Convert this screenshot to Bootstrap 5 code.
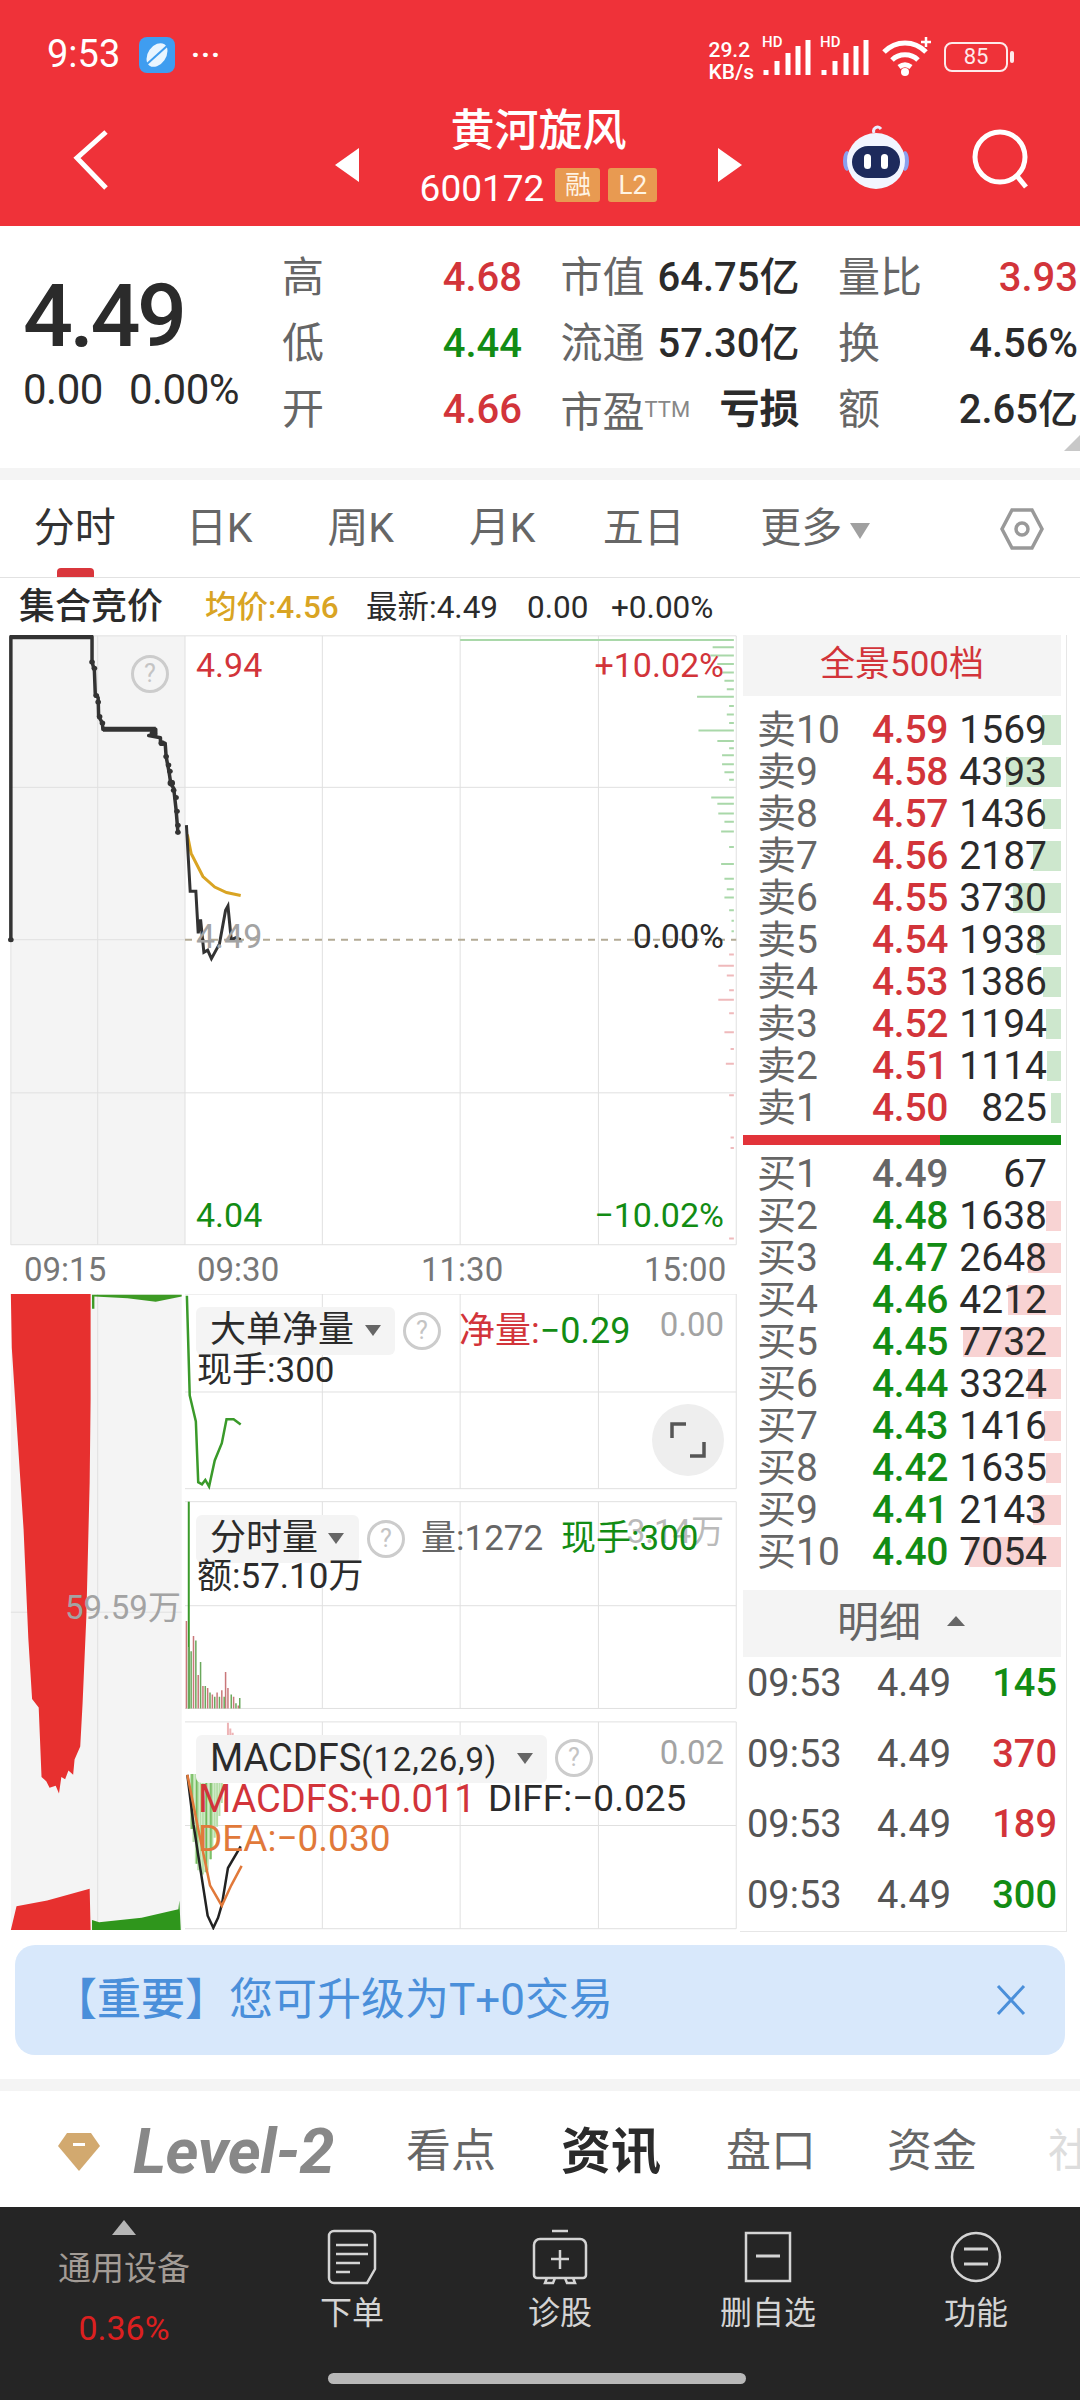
<!DOCTYPE html>
<html lang="zh-CN">
<head>
<meta charset="UTF-8">
<meta name="viewport" content="width=device-width, initial-scale=1">
<title>黄河旋风 600172</title>
<link href="https://cdn.jsdelivr.net/npm/bootstrap@5.3.2/dist/css/bootstrap.min.css" rel="stylesheet">
<style>
  html, body { width: 1080px; height: 2400px; overflow: hidden; }
  body { background: #fff; color: #2b2b2b; font-family: Roboto, "Noto Sans CJK SC", sans-serif; font-size: 36px; line-height: 1.2; }
  .c-red { color: #d2343a; }
  .c-green { color: #128c14; }
  .c-gray { color: #666; }
  .c-light { color: #a3a3a3; }
  svg { display: block; }

  /* header */
  .top-head { background: #ef3239; height: 226px; color: #fff; }
  .stat-row { height: 100px; padding: 33px 68px 0 47px; }
  .stat-time { font-size: 38px; line-height: 42px; width: 84px; }
  .stat-dots { font-size: 30px; line-height: 20px; letter-spacing: 1px; margin: 12px 0 0 16px; font-weight: 700; }
  .stat-right { margin-top: 4px; }
  .stat-speed { font-size: 21px; line-height: 22px; font-weight: 500; margin-top: 2px; }
  .stat-sig { position: relative; width: 50px; height: 40px; }
  .stat-sig span { position: absolute; left: 0; top: -2px; font-size: 15px; line-height: 15px; font-weight: 500; }
  .stat-batt { width: 64px; height: 30px; border: 2px solid #fff; border-radius: 8px; font-size: 22px; line-height: 26px; text-align: center; position: relative; margin-right: 4px; margin-top: 5px; opacity: .9; }
  .stat-batt::after { content: ""; position: absolute; right: -8px; top: 7px; width: 4px; height: 12px; background: #fff; border-radius: 2px; }
  .nav-row { display: grid; grid-template-columns: 335px 407px 338px; height: 126px; }
  .back-cell { padding: 30px 0 0 73px; }
  .mid-cell { padding-top: 6px; }
  .stock-name { font-size: 44px; line-height: 50px; font-weight: 500; text-align: center; }
  .stock-code { font-size: 37px; line-height: 42px; margin-top: 12px; }
  .code-tag { background: #e89a51; border-radius: 3px; font-size: 26px; line-height: 34px; height: 34px; text-align: center; margin-left: 8px; color: #fff4e4; }
  .tag-a { width: 45px; margin-left: 11px; }
  .tag-b { width: 49px; }
  .tri-cell { padding-top: 42px; }
  .right-cell { padding: 25px 50px 0 100px; }

  /* quote */
  .quote-box { height: 242px; padding-top: 19px; }
  .price-cell { width: 282px; padding: 25px 0 0 23px; flex: none; }
  .price-big { font-size: 88px; line-height: 92px; font-weight: 500; letter-spacing: -3.5px; }
  .price-sub { font-size: 42px; line-height: 48px; margin-top: 4px; letter-spacing: -.5px; }
  .price-sub span + span { margin-left: 26px; }
  .quote-grid { display: grid; grid-template-columns: 240px 239px 240px; column-gap: 38.5px; grid-auto-rows: 66px; flex: none; }
  .q-item { line-height: 66px; font-size: 40px; white-space: nowrap; }
  .q-item .q-lab { font-size: 42px; color: #666; }
  .ttm { font-size: 22px; color: #888; vertical-align: 10px; }
  .q-val { font-weight: 500; }
  .corner-mark { position: absolute; right: 0; top: 435px; width: 0; height: 0; border-left: 16px solid transparent; border-bottom: 16px solid #c8c8c8; }
  .gap-band { height: 12px; background: #f4f4f4; }

  /* tabs */
  .period-tabs { height: 98px; border-bottom: 1px solid #e2e2e2; position: relative; padding-left: 4px; }
  .period-tab { width: 141.5px; text-align: center; font-size: 41px; line-height: 96px; color: #666; flex: none; }
  .tab-shift { margin-left: 3px; }
  .period-on { color: #333; }
  .period-on::after { content: ""; position: absolute; left: 57px; top: 88px; width: 37px; height: 9px; border-radius: 4px 4px 0 0; background: #d9363c; }
  .more-tri { display: inline-block; width: 0; height: 0; border-left: 10px solid transparent; border-right: 10px solid transparent; border-top: 16px solid #a0a0a0; margin-left: 8px; vertical-align: 3px; }
  .more-tab { margin-left: 30px; }
  .hex-wrap { margin-left: auto; margin-right: 36px; align-self: center; }

  .info-row { height: 57px; padding-left: 19px; line-height: 60px; white-space: nowrap; font-size: 31.5px; }
  .info-title { font-size: 36px; font-weight: 500; width: 186px; flex: none; line-height: 58px; }
  .info-avg { color: #d9a423; font-weight: 500; width: 161px; flex: none; }
  .info-new { width: 161px; flex: none; }
  .info-chg { width: 84px; flex: none; }

  /* chart column */
  .board { height: 1297px; }
  .chart-col { width: 740px; flex: none; }
  .main-wrap { position: relative; height: 611px; }
  .main-wrap > svg, .sub-wrap > svg { width: 740px; height: 100%; }
  .sub-wrap { position: relative; height: 636px; }
  .ov { position: absolute; line-height: 40px; white-space: nowrap; }
  .ov-m { font-size: 34px; }
  .pos-hi { left: 196px; top: 10px; }
  .pos-hip { right: 16px; top: 10px; }
  .pos-mid { left: 196px; top: 281px; }
  .pos-midp { right: 16px; top: 281px; }
  .pos-lo { left: 196px; top: 560px; }
  .pos-lop { right: 16px; top: 560px; }
  .q-mark { position: absolute; width: 38px; height: 38px; border: 3px solid #ccc; border-radius: 50%; color: #c4c4c4; font-size: 25px; line-height: 32px; text-align: center; }
  .pos-q0 { left: 131px; top: 20px; }
  .time-row { display: grid; grid-template-columns: 173px 224px 223px auto; height: 48px; padding-left: 24px; font-size: 33px; line-height: 48px; color: #777; }

  .sel-chip { position: absolute; background: #f4f4f4; border-radius: 6px; height: 48px; padding-left: 14px; line-height: 46px; color: #2b2b2b; white-space: nowrap; }
  .chip-tri { position: absolute; top: 18px; width: 0; height: 0; border-left: 8px solid transparent; border-right: 8px solid transparent; border-top: 11px solid #666; }
  .chip-1 { left: 196px; top: 13px; width: 199px; }
  .chip-1 .chip-tri { left: 169px; }
  .chip-2 { left: 196px; top: 221px; width: 163px; }
  .chip-2 .chip-tri { left: 132px; }
  .chip-3 { left: 196px; top: 441px; width: 351px; font-size: 38px; }
  .chip-3 .chip-tri { left: 321px; }
  .params { font-size: 33px; letter-spacing: .8px; }
  .pos-q1 { left: 403px; top: 18px; }
  .pos-q2 { left: 367px; top: 226px; }
  .pos-q3 { left: 555px; top: 445px; }
  .pos-net { left: 459px; top: 17px; }
  .pos-v1 { right: 16px; top: 11px; font-size: 33px; }
  .pos-hand { left: 197px; top: 57px; font-size: 35px; }
  .pos-vol { left: 421px; top: 225px; font-size: 35px; }
  .pos-hand2 { left: 561px; top: 225px; font-size: 35px; }
  .pos-v2 { right: 16px; top: 218px; font-size: 33px; opacity: .75; }
  .pos-amt { left: 197px; top: 263px; font-size: 35px; }
  .pos-max { left: 65px; top: 294px; font-size: 33px; }
  .pos-v3 { right: 16px; top: 439px; font-size: 33px; }
  .pos-fs { left: 198px; top: 485px; font-size: 38px; }
  .pos-diff { left: 488px; top: 485px; font-size: 37px; }
  .pos-dea { left: 198px; top: 525px; font-size: 37px; color: #e1793a; }
  .expand-btn { position: absolute; left: 652px; top: 110px; width: 72px; height: 72px; border-radius: 50%; background: #eee; padding: 18px; }

  /* order book */
  .book-col { width: 327px; flex: none; padding-left: 3px; padding-right: 5px; border-right: 1px solid #e6e6e6; border-bottom: 1px solid #e6e6e6; position: relative; }
  .book-head { height: 61px; background: #f4f4f4; color: #d2343a; font-size: 35px; line-height: 60px; text-align: center; margin-bottom: 13px; }
  .book-row { display: grid; grid-template-columns: 115px 72px 1fr; height: 42px; line-height: 42px; font-size: 39px; padding-left: 14px; position: relative; white-space: nowrap; }
  .book-lab { color: #666; }
  .book-lab b { font-weight: 400; font-size: 39px; }
  .book-price { font-weight: 500; letter-spacing: -.3px; }
  .book-qty { text-align: right; padding-right: 14px; position: relative; z-index: 1; }
  .depth-bar { position: absolute; right: 0; top: 6px; height: 30px; }
  .bar-sell { background: #cde7cd; }
  .bar-buy { background: #f8d3d3; }
  .split-bar { height: 10px; margin: 6px 0 8px; background: #108c14; }
  .split-bar div { height: 100%; width: 62%; background: #e2333a; }
  .detail-head { height: 67px; background: #f4f4f4; margin-top: 17px; font-size: 42px; line-height: 66px; color: #666; padding-left: 94px; }
  .detail-tri { display: inline-block; width: 0; height: 0; border-left: 9px solid transparent; border-right: 9px solid transparent; border-bottom: 10px solid #666; margin-left: 26px; vertical-align: 11px; }
  .trade-list { row-gap: 18.7px; }
  .trade-row { display: grid; grid-template-columns: 130px 72px 1fr; height: 52px; line-height: 52px; padding-left: 4px; font-size: 38px; color: #555; }
  .trade-qty { text-align: right; padding-right: 4px; font-weight: 500; }

  /* banner */
  .notice-wrap { height: 147px; padding: 13px 15px 0; }
  .notice-box { height: 110px; background: #d8e8fb; border-radius: 20px; padding: 0 39px 0 38px; color: #4a8fda; font-size: 44px; }
  .notice-key { font-weight: 500; }

  /* lower tabs */
  .lower-tabs { height: 116px; position: relative; overflow: hidden; padding: 6px 0 0 58px; font-size: 45px; color: #666; white-space: nowrap; }
  .lvl-text { font-size: 63px; font-style: italic; font-weight: 700; color: #888; margin: 0 72px 0 33px; letter-spacing: -.5px; }
  .lower-tabs span.ltab { flex: none; margin-right: 65px; }
  .ltab-on { font-size: 50px; font-weight: 700; color: #2b2b2b; position: relative; }
  .ltab-on::after { content: ""; position: absolute; left: 20px; bottom: -31px; width: 60px; height: 6px; border-radius: 6px 6px 0 0; background: #d9363c; }
  .ltab-fund { margin-left: 6px; }
  .ltab-fade { color: #ddd; margin-left: 6px; }

  /* bottom bar */
  .dock { height: 193px; background: #252525; color: #d4d4d4; }
  .dock-row { display: grid; grid-template-columns: 248px repeat(4, 208px); height: 166px; }
  .dock-quote { text-align: center; padding-top: 13px; }
  .dock-up { width: 0; height: 0; border-left: 12px solid transparent; border-right: 12px solid transparent; border-bottom: 15px solid #b5b5b5; margin: 0 auto; }
  .dock-sector { font-size: 33px; line-height: 40px; color: #a39c96; margin-top: 14px; }
  .dock-pct { font-size: 34px; line-height: 40px; color: #dc2020; margin-top: 19px; }
  .dock-item { font-size: 32px; line-height: 40px; padding-top: 22px; text-align: center; }
  .dock-item svg { margin: 0 auto 8px; }
  .home-bar { width: 418px; height: 11px; border-radius: 6px; background: #b8b8b8; margin-left: 328px; }
</style>
</head>
<body>

<header class="top-head">
  <div class="stat-row d-flex align-items-start">
    <div class="stat-time">9:53</div>
    <svg width="36" height="36" viewBox="0 0 36 36" class="ms-2 mt-1"><rect width="36" height="36" rx="8" fill="#3f9df0"/><ellipse cx="18" cy="18" rx="9" ry="13" transform="rotate(35 18 18)" fill="#e9f5ff"/><path d="M8 27 28 9" stroke="#3f9df0" stroke-width="2"/></svg>
    <div class="stat-dots">···</div>
    <div class="stat-right ms-auto d-flex align-items-start gap-2">
      <div class="stat-speed">29.2<br>KB/s</div>
      <div class="stat-sig"><span>HD</span><svg width="50" height="40" viewBox="0 0 50 40"><path d="M4 38v-5M15 38V24M26 38V16M36 38V9M46 38V3" stroke="#fff" stroke-width="5" fill="none"/></svg></div>
      <div class="stat-sig"><span>HD</span><svg width="50" height="40" viewBox="0 0 50 40"><path d="M4 38v-5M15 38V24M26 38V16M36 38V9M46 38V3" stroke="#fff" stroke-width="5" fill="none"/></svg></div>
      <svg width="50" height="40" viewBox="0 0 50 40" class="mx-1"><g fill="none" stroke="#fff" stroke-width="5"><path d="M2 15c12-12 30-12 42 0"/><path d="M10 23c7-7 19-7 26 0"/><path d="M17 30c4-3 8-3 12 0"/></g><circle cx="23" cy="35" r="4" fill="#fff"/><path d="M44 0v10M39 5h10" stroke="#fff" stroke-width="2.5"/></svg>
      <div class="stat-batt">85</div>
    </div>
  </div>
  <div class="nav-row">
    <div class="back-cell"><svg width="36" height="60" viewBox="0 0 36 60"><path d="M33 2 4 28l29 30" fill="none" stroke="#fff" stroke-width="5"/></svg></div>
    <div class="mid-cell d-flex justify-content-between">
      <div class="tri-cell"><svg width="24" height="34" viewBox="0 0 24 34"><path d="M24 0v34L0 17z" fill="#fff"/></svg></div>
      <div>
        <div class="stock-name">黄河旋风</div>
        <div class="stock-code d-flex"><span>600172</span><span class="code-tag tag-a">融</span><span class="code-tag tag-b">L2</span></div>
      </div>
      <div class="tri-cell"><svg width="24" height="34" viewBox="0 0 24 34"><path d="M0 0v34l24-17z" fill="#fff"/></svg></div>
    </div>
    <div class="right-cell d-flex justify-content-between">
      <svg width="68" height="66" viewBox="0 0 68 66"><path d="M32 8c-2-5 4-8 7-4" fill="none" stroke="#e8edff" stroke-width="3"/><ellipse cx="5" cy="36" rx="4" ry="10" fill="#8aa0ee"/><ellipse cx="63" cy="36" rx="4" ry="10" fill="#8aa0ee"/><ellipse cx="34" cy="36" rx="29" ry="28" fill="#f2f5ff"/><rect x="10" y="21" width="48" height="32" rx="16" fill="#1d2a5c"/><rect x="22" y="29" width="7" height="15" rx="3.5" fill="#fff"/><rect x="39" y="29" width="7" height="15" rx="3.5" fill="#fff"/></svg>
      <svg width="58" height="60" viewBox="0 0 58 60" class="mt-1"><circle cx="28" cy="28" r="25" fill="none" stroke="#fff" stroke-width="5"/><path d="M45 47l9 11" stroke="#fff" stroke-width="5" fill="none"/></svg>
    </div>
  </div>
</header>

<section class="quote-box d-flex position-relative">
  <div class="price-cell">
    <div class="price-big">4.49</div>
    <div class="price-sub"><span>0.00</span><span>0.00%</span></div>
  </div>
  <div class="quote-grid">
    <div class="q-item d-flex justify-content-between"><span class="q-lab">高</span><span class="c-red q-val">4.68</span></div>
    <div class="q-item d-flex justify-content-between"><span class="q-lab">市值</span><span class="q-val">64.75亿</span></div>
    <div class="q-item d-flex justify-content-between"><span class="q-lab">量比</span><span class="c-red q-val">3.93</span></div>
    <div class="q-item d-flex justify-content-between"><span class="q-lab">低</span><span class="c-green q-val">4.44</span></div>
    <div class="q-item d-flex justify-content-between"><span class="q-lab">流通</span><span class="q-val">57.30亿</span></div>
    <div class="q-item d-flex justify-content-between"><span class="q-lab">换</span><span class="q-val">4.56%</span></div>
    <div class="q-item d-flex justify-content-between"><span class="q-lab">开</span><span class="c-red q-val">4.66</span></div>
    <div class="q-item d-flex justify-content-between"><span class="q-lab">市盈<span class="ttm">TTM</span></span><span class="q-val fw-bold">亏损</span></div>
    <div class="q-item d-flex justify-content-between"><span class="q-lab">额</span><span class="q-val">2.65亿</span></div>
  </div>
</section>
<div class="corner-mark"></div>
<div class="gap-band"></div>

<div class="period-tabs d-flex">
  <div class="period-tab period-on">分时</div>
  <div class="period-tab tab-shift">日K</div>
  <div class="period-tab">周K</div>
  <div class="period-tab">月K</div>
  <div class="period-tab">五日</div>
  <div class="period-tab more-tab">更多<i class="more-tri"></i></div>
  <div class="hex-wrap"><svg width="44" height="42" viewBox="0 0 44 42"><path d="M12 2h20l10 19-10 19H12L2 21z" fill="none" stroke="#999" stroke-width="3.5"/><circle cx="22" cy="21" r="6" fill="none" stroke="#999" stroke-width="3.5"/></svg></div>
</div>

<div class="info-row d-flex">
  <div class="info-title">集合竞价</div>
  <div class="info-avg">均价:4.56</div>
  <div class="info-new">最新:4.49</div>
  <div class="info-chg">0.00</div>
  <div>+0.00%</div>
</div>

<main class="board d-flex">
  <div class="chart-col">
    <div class="main-wrap">
      <svg viewBox="0 36 1568 1452" preserveAspectRatio="none">
        <rect x="23" y="38" width="369" height="1447" fill="#f4f4f4"/>
        <g fill="none" stroke="#e0e0e0" stroke-width="1">
          <path vector-effect="non-scaling-stroke" d="M207 38V1485M392 38V1485M683 38V1485M975 38V1485M1268 38V1485M1560 38V1485M23 38V1485"/>
          <path vector-effect="non-scaling-stroke" d="M23 38H1560M23 398H1560M23 760H392M23 1124H1560M23 1485H1560"/>
        </g>
        <path vector-effect="non-scaling-stroke" d="M392 760H1560" fill="none" stroke="#b3aa95" stroke-width="2" stroke-dasharray="7 6"/>
        <path vector-effect="non-scaling-stroke" fill="none" stroke="#a9d8a9" stroke-width="2" d="M975 48H1555M1555 65H1510M1555 85H1505M1555 105H1520M1555 125H1530M1555 145H1535M1555 165H1540M1555 183H1477M1555 205H1545M1555 225H1540M1555 245H1545M1555 263H1480M1555 288H1520M1555 305H1545M1555 322H1530M1555 343H1530M1555 362H1535M1555 380H1545M1555 422H1507M1555 437H1520M1555 460H1522M1555 480H1535M1555 503H1528M1555 540H1545M1555 580H1528M1555 615H1535M1555 640H1540M1555 660H1535M1555 690H1545M1555 715H1550M1555 740H1550"/>
        <path vector-effect="non-scaling-stroke" fill="none" stroke="#efb9bb" stroke-width="2" d="M1555 795H1545M1555 822H1522M1555 845H1540M1555 880H1545M1555 903H1522M1555 935H1545M1555 980H1535M1555 1020H1548M1555 1055H1538M1555 1130H1545M1555 1230H1548M1555 1255H1548M1555 1470H1545"/>
        <path vector-effect="non-scaling-stroke" fill="none" stroke="#333" stroke-width="3.5" stroke-linejoin="round" d="M23 760V40H195V100L200 120 202 180 208 185 209 230 217 245 218 260H330V275H315L340 280V293H350L352 325 358 360 362 390 368 400 373 450 377 505"/>
        <path vector-effect="non-scaling-stroke" fill="none" stroke="#333" stroke-width="5" d="M23 40H195M218 260H330"/>
        <g fill="#333"><ellipse cx="23" cy="760" rx="6" ry="6"/><ellipse cx="195" cy="100" rx="6" ry="6"/><ellipse cx="200" cy="115" rx="6" ry="6"/><ellipse cx="204" cy="180" rx="6" ry="6"/><ellipse cx="208" cy="195" rx="6" ry="6"/><ellipse cx="211" cy="230" rx="6" ry="6"/><ellipse cx="217" cy="245" rx="6" ry="6"/><ellipse cx="325" cy="270" rx="8" ry="8"/><ellipse cx="343" cy="293" rx="7" ry="7"/><ellipse cx="352" cy="325" rx="6" ry="6"/><ellipse cx="357" cy="345" rx="6" ry="6"/><ellipse cx="360" cy="360" rx="6" ry="6"/><ellipse cx="363" cy="388" rx="8" ry="8"/><ellipse cx="368" cy="405" rx="6" ry="6"/><ellipse cx="373" cy="422" rx="6" ry="6"/><ellipse cx="375" cy="455" rx="6" ry="6"/><ellipse cx="377" cy="488" rx="6" ry="6"/><ellipse cx="377" cy="505" rx="6" ry="6"/></g>
        <path vector-effect="non-scaling-stroke" fill="none" stroke="#d9a423" stroke-width="3" d="M397 510 405 555 430 610 455 635 480 648 510 655"/>
        <path vector-effect="non-scaling-stroke" fill="none" stroke="#333" stroke-width="3" d="M395 488 403 645H415L420 745 425 712 432 790 440 785 448 805 465 770 478 690 483 680 490 760 500 755 510 760"/>
      </svg>
      <span class="ov ov-m pos-hi c-red">4.94</span>
      <span class="ov ov-m pos-hip c-red">+10.02%</span>
      <span class="ov ov-m pos-mid c-light">4.49</span>
      <span class="ov ov-m pos-midp">0.00%</span>
      <span class="ov ov-m pos-lo c-green">4.04</span>
      <span class="ov ov-m pos-lop c-green">−10.02%</span>
      <span class="q-mark pos-q0">?</span>
    </div>
    <div class="time-row"><span>09:15</span><span>09:30</span><span>11:30</span><span>15:00</span></div>
    <div class="sub-wrap">
      <svg viewBox="0 56 1568 1467" preserveAspectRatio="none">
        <rect x="23" y="56" width="362" height="1467" fill="#f4f4f4"/>
        <path vector-effect="non-scaling-stroke" fill="none" stroke="#e0e0e0" d="M207 56V1523M683 56V505M975 56V505M1268 56V505M1560 56V505M683 535V1012M975 535V1012M1268 535V1012M1560 535V1012M683 1043V1520M975 1043V1520M1268 1043V1520M1560 1043V1520M392 56H1560M392 282H1560M392 505H1560M392 535H1560M392 775H1560M392 1012H1560M392 1043H1560M392 1282H1560M392 1520H1560M23 790H385"/>
        <path fill="#e7302f" d="M23 56H192V300L190 490 183 800 175 1000 170 1100 158 1130 155 1165 145 1155 138 1175 130 1170 125 1208 118 1190 105 1195 98 1180 88 1170 82 1010 68 990 60 850 50 600 35 350 25 180Z"/>
        <path fill="#3d9a24" d="M195 58H385V62L330 74 270 66 200 62V90H195Z"/>
        <path fill="#e7302f" d="M23 1523 35 1468 100 1455 190 1428 192 1523Z"/>
        <path fill="#2f961c" d="M195 1500 210 1505 300 1495 378 1475 380 1455 383 1523H195Z"/>
        <path vector-effect="non-scaling-stroke" fill="none" stroke="#3a9a2a" stroke-width="2.5" d="M396 60 402 290 415 350 420 490 428 495 435 485 443 500 455 440 470 400 480 345H495L510 357"/>
        <path vector-effect="non-scaling-stroke" fill="none" stroke="#3a9a2a" stroke-width="2" d="M400 535V1012"/>
        <path vector-effect="non-scaling-stroke" fill="none" stroke="#c9777a" stroke-width="1.5" d="M395 1012V810M410 1012V845M420 1012V935M430 1012V960M440 1012V965M450 1012V980M460 1012V975M470 1012V970M478 1012V928M483 1012V965M495 1012V985M505 1012V1005"/>
        <path vector-effect="non-scaling-stroke" fill="none" stroke="#6aa85c" stroke-width="1.5" d="M400 1012V870M405 1012V880M415 1012V855M425 1012V905M435 1012V960M445 1012V975M455 1012V985M465 1012V985M475 1012V985M490 1012V980M500 1012V1000M508 1012V988"/>
        <path vector-effect="non-scaling-stroke" fill="none" stroke="#b7dfaa" stroke-width="2" d="M405 1163V1290M410 1163V1320M415 1163V1370M420 1163V1385M425 1163V1390M430 1163V1395M435 1163V1390M440 1163V1385M445 1163V1360M450 1163V1335M455 1163V1310M460 1163V1285M465 1163V1260M470 1163V1230"/>
        <path vector-effect="non-scaling-stroke" fill="none" stroke="#6fb85a" stroke-width="1.5" d="M407 1163V1290M417 1163V1370M437 1163V1390M447 1163V1360"/>
        <path vector-effect="non-scaling-stroke" fill="none" stroke="#eeb4b6" stroke-width="2" d="M483 1163V1045M488 1163V1058M493 1163V1068M498 1163V1075M503 1163V1085M508 1163V1095"/>
        <path vector-effect="non-scaling-stroke" fill="none" stroke="#222" stroke-width="2.5" d="M397 1165 410 1280 430 1420 440 1490 452 1518 462 1495 470 1465 483 1380 510 1330"/>
        <path vector-effect="non-scaling-stroke" fill="none" stroke="#e1793a" stroke-width="2.5" d="M397 1165 420 1290 445 1420 470 1467 490 1420 512 1375"/>
      </svg>

      <div class="sel-chip chip-1">大单净量<i class="chip-tri"></i></div>
      <span class="q-mark pos-q1">?</span>
      <span class="ov pos-net"><span class="c-red">净量:</span><span class="c-green">−0.29</span></span>
      <span class="ov pos-v1 c-light">0.00</span>
      <span class="ov pos-hand">现手:300</span>
      <div class="expand-btn"><svg width="36" height="36" viewBox="0 0 36 36"><path d="M16 2H2V16M20 34H34V20" fill="none" stroke="#555" stroke-width="3.5"/></svg></div>

      <div class="sel-chip chip-2">分时量<i class="chip-tri"></i></div>
      <span class="q-mark pos-q2">?</span>
      <span class="ov pos-vol c-gray">量:1272</span>
      <span class="ov pos-v2 c-light">3.14万</span>
      <span class="ov pos-hand2 c-green">现手:300</span>
      <span class="ov pos-amt">额:57.10万</span>
      <span class="ov pos-max c-light">59.59万</span>

      <div class="sel-chip chip-3">MACDFS<span class="params">(12,26,9)</span><i class="chip-tri"></i></div>
      <span class="q-mark pos-q3">?</span>
      <span class="ov pos-v3 c-light">0.02</span>
      <span class="ov pos-fs c-red">MACDFS:+0.011</span>
      <span class="ov pos-diff">DIFF:−0.025</span>
      <span class="ov pos-dea">DEA:−0.030</span>
    </div>
  </div>

  <aside class="book-col">
    <div class="book-head">全景500档</div>
    <div class="book-row"><span class="book-lab"><b>卖</b>10</span><span class="book-price c-red">4.59</span><span class="book-qty">1569</span><i class="depth-bar bar-sell" style="width:19px"></i></div>
    <div class="book-row"><span class="book-lab"><b>卖</b>9</span><span class="book-price c-red">4.58</span><span class="book-qty">4393</span><i class="depth-bar bar-sell" style="width:55px"></i></div>
    <div class="book-row"><span class="book-lab"><b>卖</b>8</span><span class="book-price c-red">4.57</span><span class="book-qty">1436</span><i class="depth-bar bar-sell" style="width:18px"></i></div>
    <div class="book-row"><span class="book-lab"><b>卖</b>7</span><span class="book-price c-red">4.56</span><span class="book-qty">2187</span><i class="depth-bar bar-sell" style="width:28px"></i></div>
    <div class="book-row"><span class="book-lab"><b>卖</b>6</span><span class="book-price c-red">4.55</span><span class="book-qty">3730</span><i class="depth-bar bar-sell" style="width:48px"></i></div>
    <div class="book-row"><span class="book-lab"><b>卖</b>5</span><span class="book-price c-red">4.54</span><span class="book-qty">1938</span><i class="depth-bar bar-sell" style="width:25px"></i></div>
    <div class="book-row"><span class="book-lab"><b>卖</b>4</span><span class="book-price c-red">4.53</span><span class="book-qty">1386</span><i class="depth-bar bar-sell" style="width:18px"></i></div>
    <div class="book-row"><span class="book-lab"><b>卖</b>3</span><span class="book-price c-red">4.52</span><span class="book-qty">1194</span><i class="depth-bar bar-sell" style="width:15px"></i></div>
    <div class="book-row"><span class="book-lab"><b>卖</b>2</span><span class="book-price c-red">4.51</span><span class="book-qty">1114</span><i class="depth-bar bar-sell" style="width:14px"></i></div>
    <div class="book-row"><span class="book-lab"><b>卖</b>1</span><span class="book-price c-red">4.50</span><span class="book-qty">825</span><i class="depth-bar bar-sell" style="width:10px"></i></div>
    <div class="split-bar"><div></div></div>
    <div class="book-row"><span class="book-lab"><b>买</b>1</span><span class="book-price c-gray">4.49</span><span class="book-qty">67</span></div>
    <div class="book-row"><span class="book-lab"><b>买</b>2</span><span class="book-price c-green">4.48</span><span class="book-qty">1638</span><i class="depth-bar bar-buy" style="width:15px"></i></div>
    <div class="book-row"><span class="book-lab"><b>买</b>3</span><span class="book-price c-green">4.47</span><span class="book-qty">2648</span><i class="depth-bar bar-buy" style="width:33px"></i></div>
    <div class="book-row"><span class="book-lab"><b>买</b>4</span><span class="book-price c-green">4.46</span><span class="book-qty">4212</span><i class="depth-bar bar-buy" style="width:53px"></i></div>
    <div class="book-row"><span class="book-lab"><b>买</b>5</span><span class="book-price c-green">4.45</span><span class="book-qty">7732</span><i class="depth-bar bar-buy" style="width:98px"></i></div>
    <div class="book-row"><span class="book-lab"><b>买</b>6</span><span class="book-price c-green">4.44</span><span class="book-qty">3324</span><i class="depth-bar bar-buy" style="width:33px"></i></div>
    <div class="book-row"><span class="book-lab"><b>买</b>7</span><span class="book-price c-green">4.43</span><span class="book-qty">1416</span><i class="depth-bar bar-buy" style="width:17px"></i></div>
    <div class="book-row"><span class="book-lab"><b>买</b>8</span><span class="book-price c-green">4.42</span><span class="book-qty">1635</span><i class="depth-bar bar-buy" style="width:15px"></i></div>
    <div class="book-row"><span class="book-lab"><b>买</b>9</span><span class="book-price c-green">4.41</span><span class="book-qty">2143</span><i class="depth-bar bar-buy" style="width:28px"></i></div>
    <div class="book-row"><span class="book-lab"><b>买</b>10</span><span class="book-price c-green">4.40</span><span class="book-qty">7054</span><i class="depth-bar bar-buy" style="width:92px"></i></div>
    <div class="detail-head">明细<i class="detail-tri"></i></div>
    <div class="trade-list d-grid">
      <div class="trade-row"><span>09:53</span><span>4.49</span><span class="trade-qty c-green">145</span></div>
      <div class="trade-row"><span>09:53</span><span>4.49</span><span class="trade-qty c-red">370</span></div>
      <div class="trade-row"><span>09:53</span><span>4.49</span><span class="trade-qty c-red">189</span></div>
      <div class="trade-row"><span>09:53</span><span>4.49</span><span class="trade-qty c-green">300</span></div>
    </div>
  </aside>
</main>

<div class="notice-wrap">
  <div class="notice-box d-flex align-items-center justify-content-between">
    <div><span class="notice-key">【重要】</span>您可升级为T+0交易</div>
    <svg width="30" height="32" viewBox="0 0 30 32"><path d="M2 2l26 28M28 2 2 30" stroke="#4a8fda" stroke-width="3" fill="none"/></svg>
  </div>
</div>
<div class="gap-band"></div>

<div class="lower-tabs d-flex align-items-center">
  <svg width="42" height="38" viewBox="0 0 42 38" class="flex-shrink-0"><path d="M9 0h24l9 13-21 25L0 13z" fill="#d2a96f"/><rect x="15" y="10" width="12" height="3" fill="#fff"/></svg>
  <span class="lvl-text">Level-2</span>
  <span class="ltab">看点</span>
  <span class="ltab ltab-on">资讯</span>
  <span class="ltab">盘口</span>
  <span class="ltab ltab-fund">资金</span>
  <span class="ltab ltab-fade">社区</span>
</div>

<footer class="dock">
  <div class="dock-row">
    <div class="dock-quote">
      <div class="dock-up"></div>
      <div class="dock-sector">通用设备</div>
      <div class="dock-pct">0.36%</div>
    </div>
    <div class="dock-item">
      <svg width="50" height="56" viewBox="0 0 50 56"><path d="M7 2h36a5 5 0 0 1 5 5v33l-8 14H7a5 5 0 0 1-5-5V7a5 5 0 0 1 5-5z" fill="none" stroke="#d4d4d4" stroke-width="2.5"/><path d="M9 16h32M9 25h32M9 34h24M9 43h14" stroke="#d4d4d4" stroke-width="2.5" fill="none"/></svg>
      下单
    </div>
    <div class="dock-item">
      <svg width="58" height="56" viewBox="0 0 58 56"><path d="M21 2h16M9 10h40a6 6 0 0 1 6 6v30a3 3 0 0 1-3 3H6a3 3 0 0 1-3-3V16a6 6 0 0 1 6-6zM16 49l-2 5h8l2-5M42 49l2 5h-8l-2-5" fill="none" stroke="#d4d4d4" stroke-width="2.5"/><path d="M29 21v19M20 30h18" stroke="#d4d4d4" stroke-width="2.5"/></svg>
      诊股
    </div>
    <div class="dock-item">
      <svg width="48" height="56" viewBox="0 0 48 56"><rect x="2" y="4" width="44" height="48" fill="none" stroke="#d4d4d4" stroke-width="2.5"/><path d="M12 27h24" stroke="#d4d4d4" stroke-width="3"/></svg>
      删自选
    </div>
    <div class="dock-item">
      <svg width="52" height="56" viewBox="0 0 52 56"><circle cx="26" cy="28" r="24" fill="none" stroke="#d4d4d4" stroke-width="2.5"/><path d="M14 20h24M14 35h24" stroke="#d4d4d4" stroke-width="3"/></svg>
      功能
    </div>
  </div>
  <div class="home-bar"></div>
</footer>

<script src="https://cdn.jsdelivr.net/npm/bootstrap@5.3.2/dist/js/bootstrap.bundle.min.js"></script>
</body>
</html>
